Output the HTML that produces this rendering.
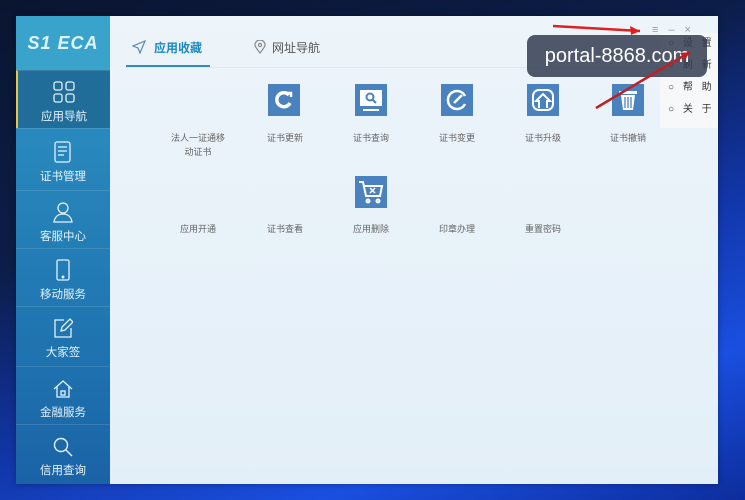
<!DOCTYPE html>
<html><head><meta charset="utf-8"><style>
*{margin:0;padding:0;box-sizing:border-box}
body{width:745px;height:500px;overflow:hidden;position:relative;font-family:"Liberation Sans","Noto Sans CJK SC",sans-serif;
background:linear-gradient(160deg,#0a1530 0%,#0c1d48 35%,#1236a8 60%,#1a4fe0 80%,#0d2d9c 100%)}
.win{position:absolute;left:16px;top:16px;width:702px;height:468px;background:linear-gradient(180deg,#edf4fa,#e3eff8);box-shadow:0 0 6px rgba(0,0,0,.3)}
.side{position:absolute;left:0;top:0;width:94px;height:468px;background:linear-gradient(180deg,#2f94c4,#1f74b0 70%,#1a63a6)}
.logo{height:54px;background:#3aa3cc;color:#dff3fb;font:italic bold 18px "Liberation Sans",sans-serif;display:flex;align-items:center;justify-content:center;letter-spacing:1px}
.it{position:absolute;left:0;width:94px;color:#e4f2fa;font-size:11.5px;text-align:center;border-top:1px solid rgba(255,255,255,.12)}
.it svg{display:block;margin:0 auto 5px}
.act{background:#1f6d98;border-left:2px solid #e9c44a}
.tab{position:absolute;top:23px;font-size:12px}
.tile{position:absolute;width:32px;height:32px;background:#4a82c0}
.lb{position:absolute;width:90px;text-align:center;font-size:9px;color:#666;line-height:14px}
.menu{position:absolute;left:660px;top:33px;width:58px;height:95px;background:#f6f8fa;font-size:10px;color:#333}
.menu div{height:22px;line-height:22px;padding-left:8px;word-spacing:6px}
.wm{position:absolute;left:527px;top:35px;width:180px;height:42px;border-radius:8px;background:rgba(50,60,80,.85);color:#fff;font-size:20px;text-align:center;line-height:42px}
</style></head><body>
<div class="win">
 <div class="side">
  <div class="logo">S1 ECA</div>
  <div class="it act" style="top:54px;height:58px;padding-top:10px"><svg width="22" height="22" viewBox="0 0 22 22" fill="none" stroke="#e4f2fa" stroke-width="1.3"><rect x="1" y="1" width="8" height="8" rx="2"/><rect x="13" y="1" width="8" height="8" rx="2"/><rect x="1" y="13" width="8" height="8" rx="2"/><rect x="13" y="13" width="8" height="8" rx="2"/></svg>应用导航</div>
  <div class="it" style="top:112px;height:62px;padding-top:12px"><svg width="18" height="22" viewBox="0 0 18 22" fill="none" stroke="#e4f2fa" stroke-width="1.3"><rect x="1" y="1" width="15" height="20" rx="2"/><path d="M4 6h9M4 10h9M4 14h6"/></svg>证书管理</div>
  <div class="it" style="top:174px;height:58px;padding-top:10px"><svg width="20" height="22" viewBox="0 0 20 22" fill="none" stroke="#e4f2fa" stroke-width="1.3"><circle cx="10" cy="7" r="5"/><path d="M1 21c1-6 5-8 9-8s8 2 9 8z"/></svg>客服中心</div>
  <div class="it" style="top:232px;height:58px;padding-top:10px"><svg width="16" height="22" viewBox="0 0 16 22" fill="none" stroke="#e4f2fa" stroke-width="1.3"><rect x="2" y="1" width="12" height="20" rx="1.5"/><circle cx="8" cy="18" r=".8"/></svg>移动服务</div>
  <div class="it" style="top:290px;height:60px;padding-top:10px"><svg width="20" height="22" viewBox="0 0 20 22" fill="none" stroke="#e4f2fa" stroke-width="1.3"><path d="M11 3H2v17h16v-9"/><path d="M8 14l1-4 8-8 3 3-8 8z"/></svg>大家签</div>
  <div class="it" style="top:350px;height:58px;padding-top:12px"><svg width="20" height="20" viewBox="0 0 20 20" fill="none" stroke="#e4f2fa" stroke-width="1.3"><path d="M1 10L10 2l9 8M4 8v10h12V8"/><rect x="8" y="12" width="4" height="4"/></svg>金融服务</div>
  <div class="it" style="top:408px;height:60px;padding-top:12px"><svg width="20" height="20" viewBox="0 0 20 20" fill="none" stroke="#e4f2fa" stroke-width="1.4"><circle cx="8" cy="8" r="6.5"/><path d="M13 13l6 6"/></svg>信用查询</div>
 </div>
 <div class="tab" style="left:116px;color:#1b8ac4;font-weight:bold"><svg width="14" height="14" viewBox="0 0 14 14" fill="none" stroke="#5a8aaa" stroke-width="1.2" style="vertical-align:-2px;margin-right:8px"><path d="M13 1L1 6l5 2 2 5z"/></svg>应用收藏</div>
 <div style="position:absolute;left:110px;top:49px;width:84px;height:3px;background:#2e8ec0"></div>
 <div style="position:absolute;left:110px;top:51px;width:592px;height:1px;background:#dde8f0"></div>
 <div class="tab" style="left:238px;color:#555"><svg width="12" height="14" viewBox="0 0 12 14" fill="none" stroke="#888" stroke-width="1.2" style="vertical-align:-2px;margin-right:6px"><path d="M6 13C2 8 1 6 1 5a5 5 0 0110 0c0 1-1 3-5 8z"/><circle cx="6" cy="5" r="1.6"/></svg>网址导航</div>

 <div class="tile" style="left:252px;top:68px"><svg width="32" height="32" viewBox="0 0 32 32" fill="none" stroke="#fff" stroke-width="3.5"><path d="M21 11a7 7 0 1 0 1 8"/><path d="M19 9h4v4" stroke-width="2.5"/></svg></div>
 <div class="tile" style="left:339px;top:68px"><svg width="32" height="32" viewBox="0 0 32 32"><rect x="5" y="6" width="22" height="16" fill="#fff"/><circle cx="15" cy="13" r="3.5" fill="none" stroke="#4a82c0" stroke-width="2"/><path d="M17 15l4 4" stroke="#4a82c0" stroke-width="2"/><path d="M8 26h16" stroke="#fff" stroke-width="2"/></svg></div>
 <div class="tile" style="left:425px;top:68px"><svg width="32" height="32" viewBox="0 0 32 32" fill="none" stroke="#fff" stroke-width="2.5"><path d="M24 12a9 9 0 1 0 0 8"/><path d="M13 19l8-8"/></svg></div>
 <div class="tile" style="left:511px;top:68px"><svg width="32" height="32" viewBox="0 0 32 32" fill="none" stroke="#fff" stroke-width="2"><rect x="6" y="6" width="20" height="20" rx="6"/><path d="M12 24v-7h-3l7-7 7 7h-3v7"/></svg></div>
 <div class="tile" style="left:596px;top:68px"><svg width="32" height="32" viewBox="0 0 32 32" fill="#fff"><rect x="7" y="7" width="18" height="3"/><path d="M9 11h14l-2 15H11z"/><path d="M13 13v11M16 13v11M19 13v11" stroke="#4a82c0" stroke-width="1.3"/></svg></div>
 <div class="tile" style="left:339px;top:160px"><svg width="32" height="32" viewBox="0 0 32 32" fill="none" stroke="#fff" stroke-width="2"><path d="M4 6h4l3 14h14l2-10H9"/><circle cx="13" cy="25" r="1.5"/><circle cx="23" cy="25" r="1.5"/><path d="M15 12l5 5M20 12l-5 5" stroke-width="1.5"/></svg></div>

 <div class="lb" style="left:137px;top:115px">法人一证通移<br>动证书</div>
 <div class="lb" style="left:224px;top:115px">证书更新</div>
 <div class="lb" style="left:310px;top:115px">证书查询</div>
 <div class="lb" style="left:396px;top:115px">证书变更</div>
 <div class="lb" style="left:482px;top:115px">证书升级</div>
 <div class="lb" style="left:567px;top:115px">证书撤销</div>
 <div class="lb" style="left:137px;top:206px">应用开通</div>
 <div class="lb" style="left:224px;top:206px">证书查看</div>
 <div class="lb" style="left:310px;top:206px">应用删除</div>
 <div class="lb" style="left:396px;top:206px">印章办理</div>
 <div class="lb" style="left:482px;top:206px">重置密码</div>
 <div style="position:absolute;left:636px;top:8px;font-size:11px;color:#999;letter-spacing:10px">≡–×</div>
</div>
<div class="menu"><div>○ 设 置</div><div>○ 刷 新</div><div>○ 帮 助</div><div>○ 关 于</div></div>
<div class="wm">portal-8868.com</div>
<svg style="position:absolute;left:0;top:0" width="745" height="500"><path d="M553 26L640 31" stroke="#e02020" stroke-width="2.5"/><path d="M640 31l-10-5 1 9z" fill="#e02020"/><path d="M596 108L690 52" stroke="#c02020" stroke-width="2.5"/><path d="M690 52l-10 1 5 7z" fill="#c02020"/></svg>
</body></html>
